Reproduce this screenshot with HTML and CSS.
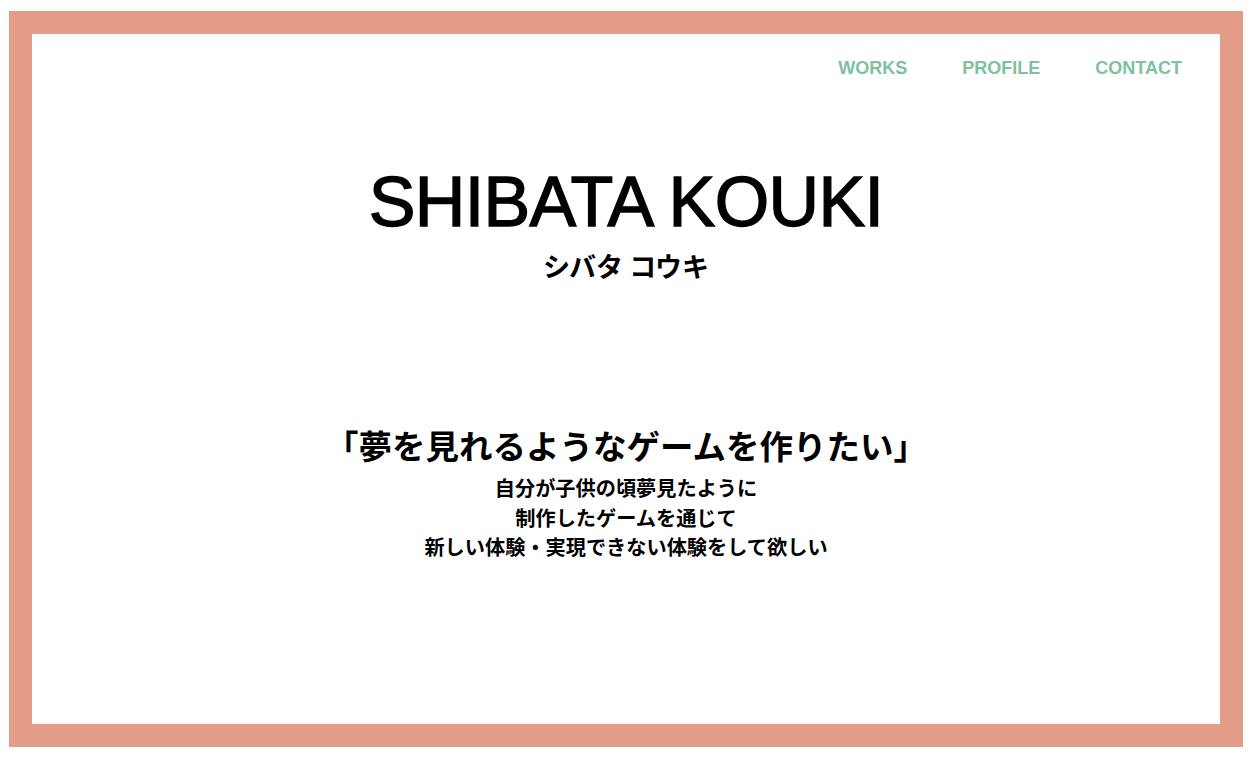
FILE: index.html
```html
<!DOCTYPE html>
<html lang="ja">
<head>
<meta charset="utf-8">
<title>SHIBATA KOUKI</title>
<link rel="stylesheet" href="styles.css">
</head>
<body>
<div class="frame">
  <nav class="nav">
    <a class="nav-link" href="#works">WORKS</a>
    <a class="nav-link" href="#profile">PROFILE</a>
    <a class="nav-link" href="#contact">CONTACT</a>
  </nav>
  <main class="hero">
    <h1 class="title">SHIBATA KOUKI</h1>
    <p class="kana">シバタ コウキ</p>
    <h2 class="quote">「夢を見れるようなゲームを作りたい」</h2>
    <p class="message">自分が子供の頃夢見たように<br>制作したゲームを通じて<br>新しい体験・実現できない体験をして欲しい</p>
  </main>
</div>
</body>
</html>
```
FILE: styles.css
```css
html, body {
  margin: 0;
  padding: 0;
  background: #ffffff;
}
body {
  padding: 11px 15px 13px 9px;
  height: 100vh;
  box-sizing: border-box;
  font-family: "Liberation Sans", Arial, "Noto Sans CJK JP", sans-serif;
  color: #000;
}
.frame {
  height: 100%;
  box-sizing: border-box;
  border: 23px solid #e39c88;
  display: flex;
  flex-direction: column;
}
.nav {
  display: flex;
  justify-content: flex-end;
  gap: 55px;
  padding: 24px 38px 0 0;
}
.nav-link {
  font-family: "Liberation Sans", Arial, sans-serif;
  font-weight: bold;
  font-size: 18px;
  line-height: 21px;
  color: #7dc29d;
  text-decoration: none;
}
.hero {
  display: flex;
  flex-direction: column;
  align-items: center;
  text-align: center;
}
.title {
  margin: 88px 0 0;
  font-family: "Liberation Sans", Arial, sans-serif;
  font-weight: normal;
  font-size: 70px;
  line-height: 70px;
  letter-spacing: -0.6px;
  -webkit-text-stroke: 1.4px #000;
}
.kana {
  margin: 11px 0 0;
  font-family: "Noto Sans CJK JP", sans-serif;
  font-weight: bold;
  font-size: 27px;
  line-height: 36px;
}
.quote {
  margin: 140px 0 0;
  font-family: "Noto Sans CJK JP", sans-serif;
  font-weight: bold;
  font-size: 33.5px;
  line-height: 42px;
}
.message {
  margin: 7px 0 0;
  font-family: "Noto Sans CJK JP", sans-serif;
  font-weight: bold;
  font-size: 20.2px;
  line-height: 29.5px;
}
```
